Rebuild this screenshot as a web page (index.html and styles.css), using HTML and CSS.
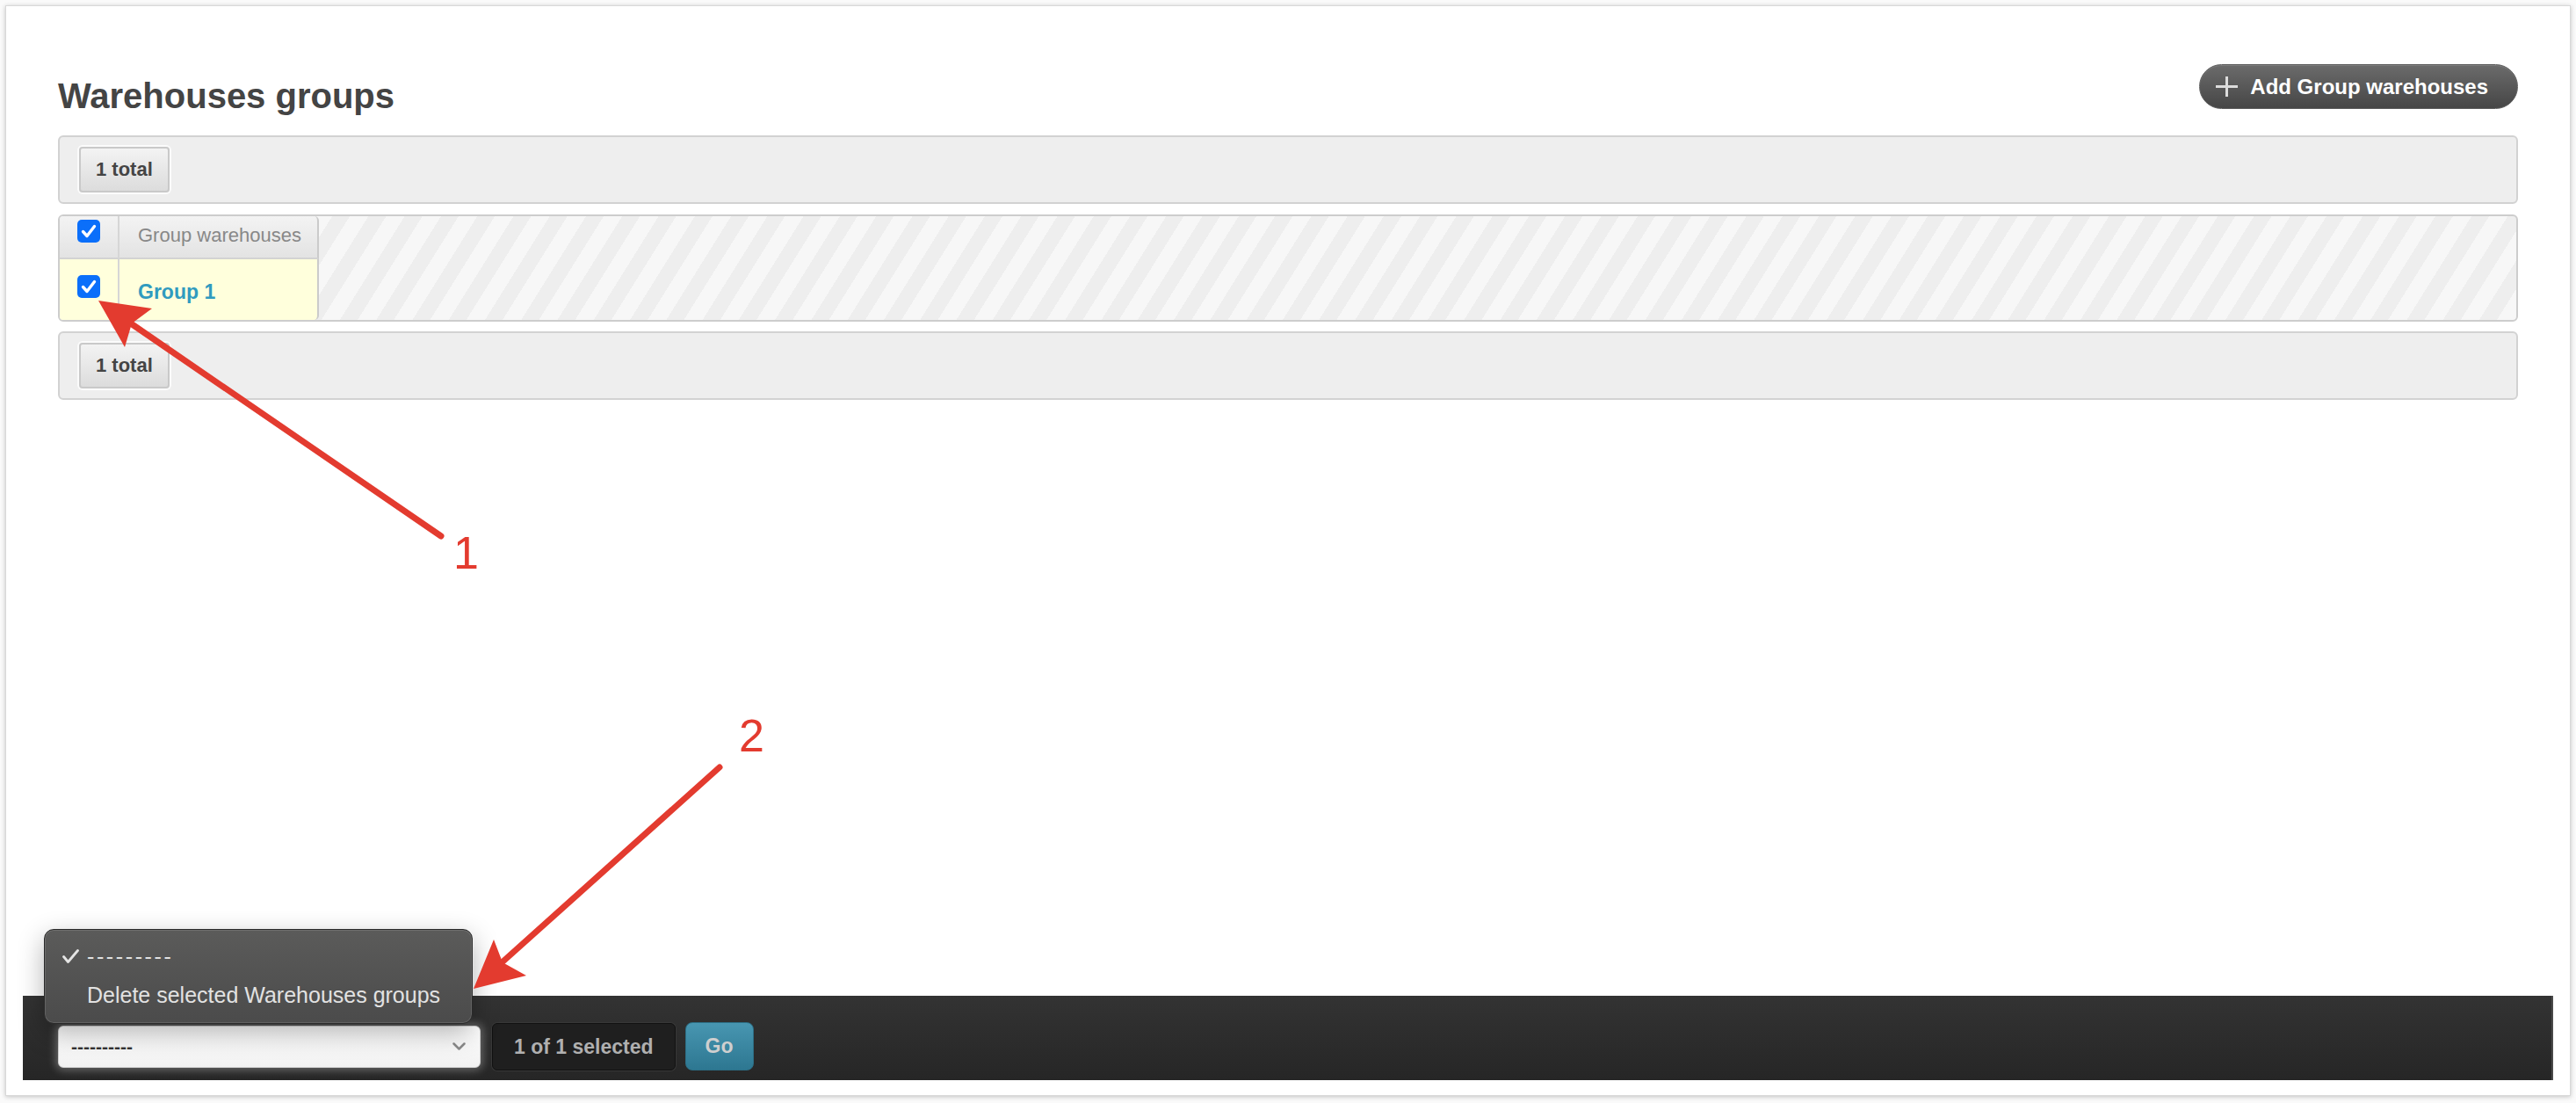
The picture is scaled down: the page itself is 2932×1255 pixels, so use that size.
FILE: index.html
```html
<!DOCTYPE html>
<html lang="en">
<head>
<meta charset="UTF-8">
<meta name="viewport" content="width=device-width, initial-scale=1.0">
<title>Warehouses groups</title>
<link rel="stylesheet" href="styles.css">
</head>
<body>

<div class="window">
    <div class="content">
        <div class="page-head">
            <h1>Warehouses groups</h1>
            <a class="add-link" href="#">
                <svg class="plus" width="25" height="23" viewBox="0 0 25 23"><path d="M12.5 0v23M0 11.5h25" stroke="#dcdcdc" stroke-width="3"/></svg>
                <span>Add Group warehouses</span>
            </a>
        </div>

        <div class="paginator"><span class="total">1 total</span></div>

        <div class="result-list">
            <div class="head-cell check-cell">
                <span class="checkbox"><svg width="26" height="26" viewBox="0 0 26 26"><rect width="26" height="26" rx="5" fill="#0b6ffa"/><path d="M6.5 13.5l4.5 5 8.5-11" fill="none" stroke="#fff" stroke-width="3.4" stroke-linecap="round" stroke-linejoin="round"/></svg></span>
            </div>
            <div class="head-cell name-cell">Group warehouses</div>
            <div class="fill"></div>
            <div class="row-cell check-cell">
                <span class="checkbox"><svg width="26" height="26" viewBox="0 0 26 26"><rect width="26" height="26" rx="5" fill="#0b6ffa"/><path d="M6.5 13.5l4.5 5 8.5-11" fill="none" stroke="#fff" stroke-width="3.4" stroke-linecap="round" stroke-linejoin="round"/></svg></span>
            </div>
            <div class="row-cell name-cell"><a href="#">Group 1</a></div>
        </div>

        <div class="paginator bottom"><span class="total">1 total</span></div>
    </div>

    <div class="actions">
        <div class="select">
            <span>----------</span>
            <svg width="15" height="9" viewBox="0 0 15 9"><path d="M1.5 1.5l6 6 6-6" fill="none" stroke="#8a8a8a" stroke-width="2.5" stroke-linecap="round" stroke-linejoin="round"/></svg>
        </div>
        <span class="counter">1 of 1 selected</span>
        <button class="go">Go</button>
    </div>
</div>

<!-- native select menu, open -->
<div class="menu">
    <div class="menu-item">
        <span class="tick"><svg width="19" height="16" viewBox="0 0 19 16"><path d="M1.5 8.5l5 6 11-13" fill="none" stroke="#e4e4e4" stroke-width="2.8" stroke-linecap="round" stroke-linejoin="round"/></svg></span>
        <span class="dashes">---------</span>
    </div>
    <div class="menu-item">
        <span class="tick"></span>
        <span>Delete selected Warehouses groups</span>
    </div>
</div>

<!-- annotation arrows -->
<svg class="marks" width="2932" height="1255" viewBox="0 0 2932 1255">
    <line x1="502" y1="610" x2="146" y2="366" stroke="#e33b2f" stroke-width="7" stroke-linecap="round"/>
    <polygon points="112,342 173,351 150,368 142,395" fill="#e33b2f"/>
    <text x="516" y="647" class="mark-label">1</text>
    <line x1="819" y1="873" x2="568" y2="1098" stroke="#e33b2f" stroke-width="7" stroke-linecap="round"/>
    <polygon points="539,1125 562,1069 572,1095 599,1110" fill="#e33b2f"/>
    <text x="841" y="855" class="mark-label">2</text>
</svg>

</body>
</html>
```

FILE: styles.css
```css
body {
    margin: 0;
    background-color: #fafafa;
    font-family: "Liberation Sans", Arial, sans-serif;
    color: #444;
}
.window {
    margin: 6px;
    width: 2920px;
    height: 1241px;
    box-sizing: border-box;
    border: 1px solid #d8d8d8;
    background: #fff;
    box-shadow: 0 1px 5px rgba(0, 0, 0, 0.22);
    display: flex;
    flex-direction: column;
}
.content {
    padding: 66px 59px 0;
}
.page-head {
    display: flex;
    justify-content: space-between;
    align-items: flex-start;
}
h1 {
    margin: 16px 0 0;
    font-size: 40px;
    line-height: 40px;
    font-weight: bold;
    color: #444;
}
.add-link {
    display: flex;
    align-items: center;
    height: 51px;
    box-sizing: border-box;
    padding: 0 33px 0 18px;
    border: 1px solid #5c5c5c;
    border-radius: 26px;
    background: linear-gradient(#6b6b6b, #464646);
    box-shadow: inset 0 1px 0 rgba(255, 255, 255, 0.12);
    color: #fff;
    font-size: 24px;
    font-weight: bold;
    text-decoration: none;
}
.add-link .plus {
    margin-right: 14px;
}
.paginator {
    margin-top: 25px;
    border: 2px solid #d2d2d2;
    border-radius: 6px;
    background: #eee;
    padding: 11px 22px;
}
.paginator.bottom {
    margin-top: 11px;
}
.total {
    display: inline-block;
    height: 52px;
    box-sizing: border-box;
    padding: 0 17px;
    border: 2px solid #c9c9c9;
    border-radius: 4px;
    background: linear-gradient(#f3f3f3, #dcdcdc);
    box-shadow: 0 0 0 2px #fbfbfb;
    font-size: 22px;
    font-weight: bold;
    line-height: 48px;
    color: #444;
}
.result-list {
    margin-top: 12px;
    display: grid;
    grid-template-columns: 68px 227px 1fr;
    grid-template-rows: 49px 69px;
    border: 2px solid #cdcdcd;
    border-radius: 6px;
    overflow: hidden;
    background: repeating-linear-gradient(122deg, #f7f7f7 0 18px, #eeeeee 18px 35px);
}
.fill {
    grid-column: 3;
    grid-row: 1 / 3;
}
.head-cell {
    box-sizing: border-box;
    background: linear-gradient(#f3f3f3, #e3e3e3);
    border-bottom: 2px solid #d3d3d3;
    border-right: 2px solid #d6d6d6;
}
.row-cell {
    box-sizing: border-box;
    background: #ffffdc;
    border-right: 2px solid #d6d6d6;
}
.check-cell {
    display: flex;
    justify-content: center;
}
.head-cell.check-cell {
    padding-top: 4px;
}
.row-cell.check-cell {
    padding-top: 18px;
}
.checkbox {
    display: block;
    width: 26px;
    height: 26px;
}
.checkbox svg {
    display: block;
}
.name-cell {
    border-right-color: #cbcbcb;
    padding-left: 21px;
}
.head-cell.name-cell {
    padding-top: 9px;
    font-size: 22px;
    line-height: 26px;
    color: #888;
    border-top-right-radius: 5px;
}
.row-cell.name-cell {
    padding-top: 24px;
    border-bottom-right-radius: 5px;
}
.row-cell.name-cell a {
    font-size: 23px;
    line-height: 27px;
    font-weight: bold;
    color: #309bbf;
    text-decoration: none;
}
.actions {
    margin: auto 19px 17px;
    height: 96px;
    box-sizing: border-box;
    padding: 30px 40px 11px;
    display: flex;
    align-items: center;
    background: linear-gradient(#333, #262626);
    border-right: 2px solid #4a4a4a;
}
.select {
    width: 481px;
    height: 48px;
    box-sizing: border-box;
    display: flex;
    align-items: center;
    justify-content: space-between;
    padding: 0 16px 0 14px;
    border: 1px solid #cfcfcf;
    border-radius: 6px;
    background: linear-gradient(#fff, #f2f2f2);
    box-shadow: 0 0 10px 3px rgba(255, 255, 255, 0.28);
    font-size: 21px;
    font-weight: bold;
    color: #333;
}
.counter {
    margin-left: 13px;
    height: 54px;
    box-sizing: border-box;
    padding: 0 24px;
    border: 1px solid #111;
    border-radius: 6px;
    background: #1f1f1f;
    box-shadow: 0 0 0 1px #383838;
    font-size: 23px;
    font-weight: bold;
    line-height: 52px;
    color: #b0b0b0;
}
.go {
    margin-left: 11px;
    width: 78px;
    height: 55px;
    padding: 0;
    border: 1px solid #2c6e85;
    border-radius: 8px;
    background: linear-gradient(#4896b1, #2d7791);
    font-family: "Liberation Sans", Arial, sans-serif;
    font-size: 23px;
    font-weight: bold;
    color: #cfcfcf;
}
.menu {
    position: absolute;
    left: 50px;
    top: 1057px;
    width: 488px;
    height: 108px;
    box-sizing: border-box;
    padding-top: 8px;
    border: 1px solid #2a2a2a;
    border-radius: 11px;
    background: linear-gradient(#5b5b5a, #4b4b4b);
    box-shadow: inset 0 0 0 1px rgba(255, 255, 255, 0.12), 0 10px 30px rgba(0, 0, 0, 0.3);
    color: #e2e2e2;
    font-size: 25px;
    line-height: 44px;
}
.menu-item {
    display: flex;
    align-items: center;
    padding-left: 20px;
}
.tick {
    width: 28px;
    display: flex;
}
.dashes {
    letter-spacing: 2.6px;
}
.marks {
    position: absolute;
    left: 0;
    top: 0;
    pointer-events: none;
}
.mark-label {
    font-family: "Liberation Sans", Arial, sans-serif;
    font-size: 52px;
    fill: #e33b2f;
}
```
